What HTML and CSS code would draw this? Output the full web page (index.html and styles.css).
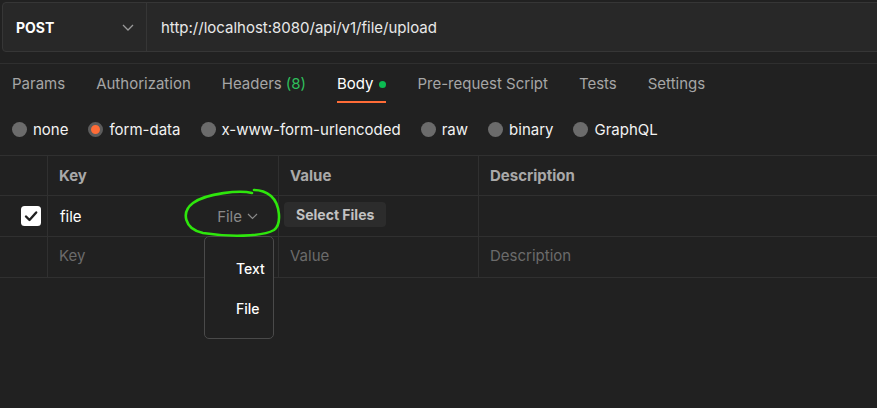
FILE: index.html
```html
<!DOCTYPE html>
<html lang="en">
<head>
    <meta charset="UTF-8">
    <meta name="viewport" content="width=device-width, initial-scale=1.0">
    <title>Upload request</title>
    <link rel="stylesheet" href="styles.css">
</head>
<body>
<div class="url-bar">
    <div class="method">
        <span>POST</span>
        <svg class="chev" width="12" height="7" viewBox="0 0 12 7"><path d="M1 1 L6 6 L11 1" fill="none" stroke="#9a9a9a" stroke-width="1.3"/></svg>
    </div>
    <div class="url">http://localhost:8080/api/v1/file/upload</div>
</div>

<div class="tabs">
    <div class="tab">Params</div>
    <div class="tab">Authorization</div>
    <div class="tab">Headers <span class="count">(8)</span></div>
    <div class="tab active">Body <span class="dot"></span></div>
    <div class="tab">Pre-request Script</div>
    <div class="tab">Tests</div>
    <div class="tab">Settings</div>
</div>

<div class="body-types">
    <label class="radio"><span class="circle"></span>none</label>
    <label class="radio"><span class="circle on"></span>form-data</label>
    <label class="radio"><span class="circle"></span>x-www-form-urlencoded</label>
    <label class="radio"><span class="circle"></span>raw</label>
    <label class="radio"><span class="circle"></span>binary</label>
    <label class="radio"><span class="circle"></span>GraphQL</label>
</div>

<div class="params">
    <div class="row head">
        <div class="cell check"></div>
        <div class="cell">Key</div>
        <div class="cell">Value</div>
        <div class="cell last">Description</div>
    </div>
    <div class="row">
        <div class="cell check">
            <svg width="20" height="20" viewBox="0 0 20 20"><rect x="0" y="0" width="20" height="20" rx="3.5" fill="#ffffff"/><path d="M5 10.5 L8.5 14 L15.2 6.5" fill="none" stroke="#1f1f1f" stroke-width="2.4" stroke-linecap="round" stroke-linejoin="round"/></svg>
        </div>
        <div class="cell key">
            <span class="key-name">file</span>
            <span class="type">File
                <svg width="11" height="7" viewBox="0 0 11 7"><path d="M1 1 L5.5 5.5 L10 1" fill="none" stroke="#8a8a8a" stroke-width="1.2"/></svg>
            </span>
            <div class="type-menu">
                <div class="menu-item">Text</div>
                <div class="menu-item">File</div>
            </div>
        </div>
        <div class="cell"><button class="select-btn">Select Files</button></div>
        <div class="cell last"></div>
    </div>
    <div class="row">
        <div class="cell check"></div>
        <div class="cell placeholder">Key</div>
        <div class="cell placeholder">Value</div>
        <div class="cell last placeholder">Description</div>
    </div>
</div>

<svg class="scribble" width="877" height="408" viewBox="0 0 877 408">
    <path d="M252 193 C240 190, 207 193, 193 203 C181 212, 184 229, 203 233 C228 237, 262 237, 274 230 C282 224, 280 204, 271 196 C265 191, 259 190, 254 190"
          fill="none" stroke="#2ee60c" stroke-width="2.6" stroke-linecap="round"/>
</svg>
</body>
</html>
```

FILE: styles.css
```css
* {
    margin: 0;
    padding: 0;
    box-sizing: border-box;
}
body {
    font-family: 'Inter', 'Noto Sans', sans-serif;
    font-size: 15px;
    background-color: #212121;
    color: #f0f0f0;
    position: relative;
    overflow: hidden;
    height: 408px;
}
.url-bar {
    display: flex;
    height: 50px;
    margin: 2px -20px 0 2px;
    background: #282828;
    border: 1px solid #363636;
    border-radius: 4px;
}
.method {
    width: 144px;
    display: flex;
    align-items: center;
    justify-content: space-between;
    padding: 0 12px 0 13px;
    border-right: 1px solid #363636;
    font-weight: 700;
    font-size: 14px;
    color: #ffffff;
}
.url {
    display: flex;
    align-items: center;
    padding-left: 14px;
    color: #e8e8e8;
}
.tabs {
    display: flex;
    gap: 31px;
    margin-top: 11px;
    padding-left: 12px;
    border-top: 1px solid #2f2f2f;
}
.tab {
    padding: 10px 0 7px;
    line-height: 20px;
    color: #a6a6a6;
    border-bottom: 2px solid transparent;
    display: flex;
    align-items: center;
    gap: 4px;
}
.tab.active {
    color: #ffffff;
    border-bottom-color: #ff6c37;
}
.count {
    color: #2fbf5b;
}
.dot {
    width: 7px;
    height: 7px;
    border-radius: 50%;
    background: #0cbb52;
    margin-left: 2px;
}
.body-types {
    height: 52px;
    display: flex;
    align-items: center;
    gap: 20px;
    padding-left: 12px;
}
.radio {
    display: flex;
    align-items: center;
    gap: 6px;
    color: #f2f2f2;
}
.circle {
    width: 15px;
    height: 15px;
    border-radius: 50%;
    background: #6b6b6b;
}
.circle.on {
    background: #ff6c37;
    border: 3px solid #5c5c5c;
}
.params {
    border-top: 1px solid #303030;
}
.row {
    display: grid;
    grid-template-columns: 48px 231px 200px 1fr;
    height: 41px;
    border-bottom: 1px solid #303030;
}
.row.head {
    height: 40px;
    font-weight: 700;
    color: #a9a9a9;
}
.cell {
    display: flex;
    align-items: center;
    padding-left: 11px;
    border-right: 1px solid #303030;
}
.cell.last {
    border-right: none;
}
.cell.check {
    justify-content: flex-end;
    padding: 0 6px 0 0;
}
.cell.check svg {
    display: block;
}
.placeholder {
    color: #6b6b6b;
    padding-bottom: 3px;
}
.key {
    position: relative;
    justify-content: space-between;
    padding-right: 20px;
    padding-left: 12px;
    color: #ffffff;
}
.type {
    display: flex;
    align-items: center;
    gap: 5px;
    color: #8a8a8a;
}
.type-menu {
    position: absolute;
    left: 156px;
    top: 40px;
    width: 70px;
    height: 103px;
    padding-top: 12px;
    background: #212121;
    border: 1px solid #4a4a4a;
    border-radius: 5px;
    z-index: 2;
}
.menu-item {
    height: 40px;
    line-height: 40px;
    padding-left: 31px;
    font-size: 14px;
    font-weight: 500;
    color: #ffffff;
}
.select-btn {
    font-family: inherit;
    font-size: 14px;
    font-weight: 700;
    color: #c2c2c2;
    background: #2c2c2c;
    border: none;
    border-radius: 4px;
    height: 25px;
    padding: 0 12px;
    margin-left: -6px;
    margin-top: -4px;
}
.scribble {
    position: absolute;
    left: 0;
    top: 0;
    pointer-events: none;
    z-index: 3;
}
```
